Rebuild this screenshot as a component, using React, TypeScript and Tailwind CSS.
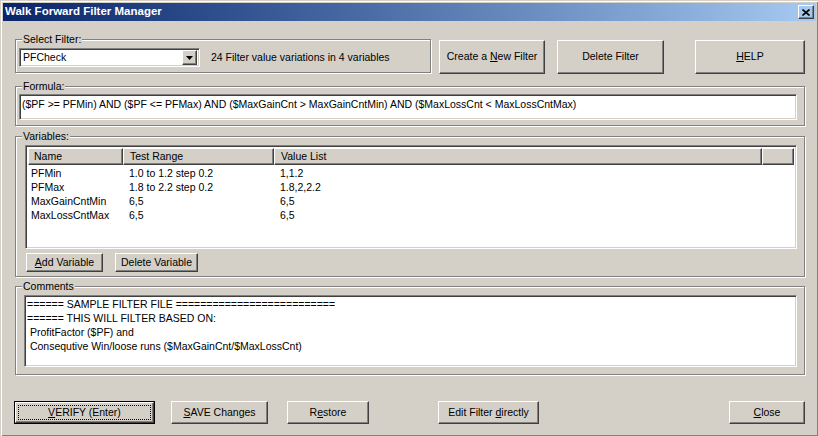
import type { ReactNode } from "react";

const raised =
  "border-t border-l border-t-white border-l-white border-r border-b border-r-[#404040] border-b-[#404040] shadow-[inset_-1px_-1px_0_#808080]";
const sunken =
  "border-t border-l border-t-[#808080] border-l-[#808080] border-r border-b border-r-white border-b-white shadow-[inset_1px_1px_0_#404040,inset_-1px_-1px_0_#d4d0c8]";

function Btn({
  children,
  className = "",
  isDefault = false,
}: {
  children: ReactNode;
  className?: string;
  isDefault?: boolean;
}) {
  if (isDefault) {
    return (
      <div className={`border border-black ${className}`}>
        <div className={`h-full ${raised} flex p-[2px]`}>
          <div className="flex flex-1 items-center justify-center border border-dotted border-black">
            {children}
          </div>
        </div>
      </div>
    );
  }
  return (
    <div className={`${raised} flex items-center justify-center ${className}`}>
      {children}
    </div>
  );
}

function Group({
  label,
  className = "",
  children,
}: {
  label: string;
  className?: string;
  children: ReactNode;
}) {
  return (
    <div
      className={`w-[790px] border border-[#808080] shadow-[inset_1px_1px_0_#fff,1px_1px_0_#fff] ${className}`}
    >
      <span className="-mt-[7px] ml-[6px] block w-fit bg-[#d4d0c8] px-[1px] leading-[13px]">
        {label}
      </span>
      {children}
    </div>
  );
}

const rows = [
  ["PFMin", "1.0 to 1.2 step 0.2", "1,1.2"],
  ["PFMax", "1.8 to 2.2 step 0.2", "1.8,2,2.2"],
  ["MaxGainCntMin", "6,5", "6,5"],
  ["MaxLossCntMax", "6,5", "6,5"],
];

const comments = [
  "====== SAMPLE FILTER FILE ==========================",
  "====== THIS WILL FILTER BASED ON:",
  " ProfitFactor ($PF) and",
  " Consequtive Win/loose runs ($MaxGainCnt/$MaxLossCnt)",
];

export default function App() {
  return (
    <div
      className="flex h-[436px] w-[818px] flex-col border-t border-l border-[#d4d0c8] border-r-[#404040] border-b-[#404040] bg-[#d4d0c8] p-[2px] text-[10.5px] text-black shadow-[inset_1px_1px_0_#fff,inset_-1px_-1px_0_#808080]"
      style={{ fontFamily: '"Liberation Sans", Arial, sans-serif' }}
    >
      {/* title bar */}
      <div className="flex h-[18px] items-center bg-linear-to-r from-[#0a246a] to-[#a6caf0] pl-[2px] pr-[2px]">
        <span className="flex-1 text-[11.5px] font-bold text-white">
          Walk Forward Filter Manager
        </span>
        <div className={`${raised} flex h-[14px] w-[16px] items-center justify-center`}>
          <svg width="8" height="7" viewBox="0 0 8 7">
            <path d="M0.5 0.5 L7.5 6.5 M7.5 0.5 L0.5 6.5" stroke="#000" strokeWidth="1.6" />
          </svg>
        </div>
      </div>

      <div className="flex flex-col pl-[12px]">
        {/* select filter row */}
        <div className="mt-[18px] flex items-start">
          <div className="h-[34px] w-[416px] border border-[#808080] shadow-[inset_1px_1px_0_#fff,1px_1px_0_#fff]">
            <span className="-mt-[7px] ml-[6px] block w-fit bg-[#d4d0c8] px-[1px] leading-[13px]">
              Select Filter:
            </span>
            <div className="mt-[2px] flex items-center pl-[3px]">
              <div className={`${sunken} flex h-[19px] w-[181px] items-center bg-white p-[2px]`}>
                <span className="flex-1 pl-[1px]">PFCheck</span>
                <div className={`${raised} flex h-[15px] w-[15px] items-center justify-center bg-[#d4d0c8]`}>
                  <svg width="7" height="4" viewBox="0 0 7 4">
                    <path d="M0 0 H7 L3.5 4 Z" fill="#000" />
                  </svg>
                </div>
              </div>
              <span className="ml-[11px]">24 Filter value variations in 4 variables</span>
            </div>
          </div>
          <Btn className="ml-[8px] mt-[1px] h-[34px] w-[106px]">
            Create a&nbsp;<u className="underline-offset-[1px]">N</u>ew Filter
          </Btn>
          <Btn className="ml-[12px] mt-[1px] h-[34px] w-[107px]">Delete Filter</Btn>
          <Btn className="ml-[31px] mt-[1px] h-[34px] w-[110px]">
            <u className="underline-offset-[1px]">H</u>ELP
          </Btn>
        </div>

        {/* formula */}
        <Group label="Formula:" className="mt-[12px] h-[40px]">
          <div className={`${sunken} ml-[3px] mt-[1px] h-[26px] w-[778px] bg-white px-[2px] pt-[3px] leading-[13px]`}>
            ($PF &gt;= PFMin) AND ($PF &lt;= PFMax) AND ($MaxGainCnt &gt; MaxGainCntMin) AND ($MaxLossCnt &lt; MaxLossCntMax)
          </div>
        </Group>

        {/* variables */}
        <Group label="Variables:" className="mt-[10px] h-[141px]">
          <div className={`${sunken} ml-[9px] mt-[2px] flex h-[104px] w-[772px] flex-col bg-white p-[2px]`}>
            <div className="flex h-[17px] shrink-0 bg-[#d4d0c8]">
              <div className={`${raised} flex w-[95px] items-center pl-[5px]`}>Name</div>
              <div className={`${raised} flex w-[151px] items-center pl-[6px]`}>Test Range</div>
              <div className={`${raised} flex w-[488px] items-center pl-[6px]`}>Value List</div>
              <div className={`${raised} flex-1`} />
            </div>
            <div className="pt-[2px]">
              {rows.map((r) => (
                <div key={r[0]} className="flex h-[14px] items-center">
                  <span className="w-[95px] pl-[3px]">{r[0]}</span>
                  <span className="w-[151px] pl-[6px]">{r[1]}</span>
                  <span className="pl-[6px]">{r[2]}</span>
                </div>
              ))}
            </div>
          </div>
          <div className="mt-[4px] flex pl-[10px]">
            <Btn className="h-[19px] w-[77px]">
              <u className="underline-offset-[1px]">A</u>dd Variable
            </Btn>
            <Btn className="ml-[12px] h-[19px] w-[83px]">Delete Variable</Btn>
          </div>
        </Group>

        {/* comments */}
        <Group label="Comments" className="mt-[9px] h-[89px]">
          <div className={`${sunken} ml-[8px] mt-[2px] h-[72px] w-[773px] bg-white px-[2px] pt-[1px] leading-[14px]`}>
            {comments.map((c, i) => (
              <div key={i} className="whitespace-pre">
                {c}
              </div>
            ))}
          </div>
        </Group>
      </div>

      {/* bottom buttons */}
      <div className="mt-[26px] flex">
        <Btn isDefault className="ml-[11px] h-[23px] w-[141px]">
          <span>
            <u className="underline-offset-[1px]">V</u>ERIFY (Enter)
          </span>
        </Btn>
        <Btn className="ml-[16px] h-[23px] w-[97px]">
          <u className="underline-offset-[1px]">S</u>AVE Changes
        </Btn>
        <Btn className="ml-[19px] h-[23px] w-[82px]">
          R<u className="underline-offset-[1px]">e</u>store
        </Btn>
        <Btn className="ml-[69px] h-[23px] w-[101px]">
          Edit Filter&nbsp;<u className="underline-offset-[1px]">d</u>irectly
        </Btn>
        <Btn className="ml-[190px] h-[23px] w-[76px]">
          <u className="underline-offset-[1px]">C</u>lose
        </Btn>
      </div>
    </div>
  );
}
